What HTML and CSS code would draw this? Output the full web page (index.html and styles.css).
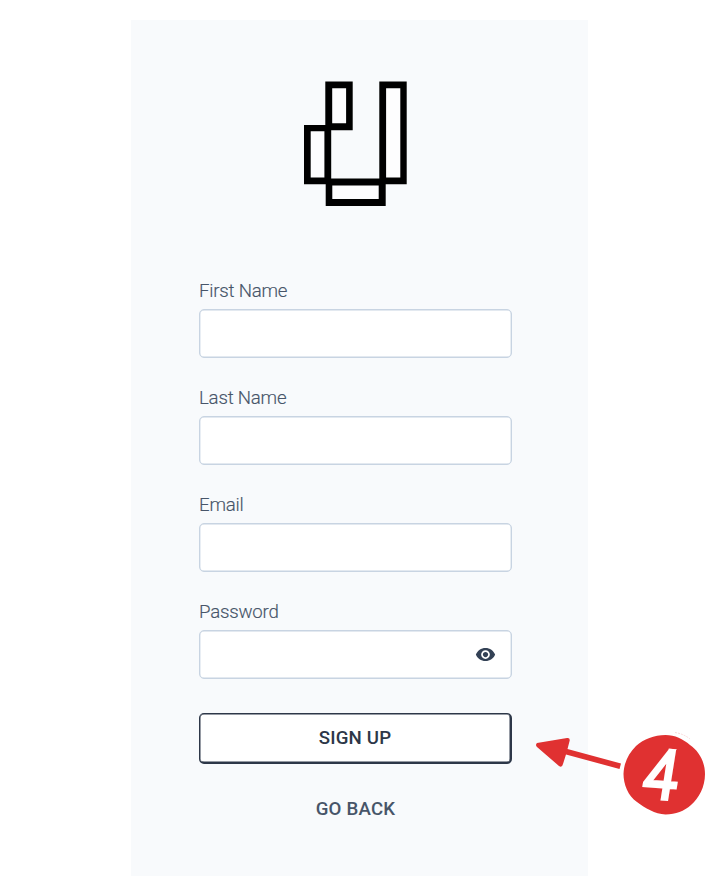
FILE: index.html
```html
<!DOCTYPE html>
<html lang="en">
<head>
<meta charset="utf-8">
<title>Sign up</title>
<link rel="stylesheet" href="styles.css">
</head>
<body>
<main class="panel">
  <svg class="logo" viewBox="304 81 103 125" aria-hidden="true">
    <path d="M325.3 81.4h27.4v48.8h-21.5v48.2h48.1v-97h27.4v102.9h-21v21.7h-60v-21.7H304v-59.4h21.3z"/>
    <path class="hole" d="M332.2 88.3h13.9v35h-13.9zM310.7 131.3h13.7v46.3h-13.7zM386.1 88.3h14.2v89.3h-14.2zM332.3 185.4h46.4v13.7h-46.4z"/>
  </svg>
  <form class="form">
    <div class="field"><label for="first">First Name</label><input id="first" type="text"></div>
    <div class="field"><label for="last">Last Name</label><input id="last" type="text"></div>
    <div class="field"><label for="email">Email</label><input id="email" type="text"></div>
    <div class="field password">
      <label for="pass">Password</label><input id="pass" type="password">
      <svg class="eye" viewBox="0 0 24 24" aria-hidden="true"><path d="M12 4.5C7 4.5 2.73 7.61 1 12c1.73 4.39 6 7.5 11 7.5s9.27-3.11 11-7.5c-1.73-4.39-6-7.5-11-7.5zM12 17c-2.76 0-5-2.24-5-5s2.24-5 5-5 5 2.24 5 5-2.24 5-5 5zm0-8c-1.66 0-3 1.34-3 3s1.34 3 3 3 3-1.34 3-3-1.34-3-3-3z"/></svg>
    </div>
    <button class="signup" type="button">SIGN UP</button>
    <button class="back" type="button">GO BACK</button>
  </form>
</main>
<div class="callout">
  <svg class="marker" viewBox="530 725 186 100" aria-hidden="true">
    <path d="M537 743Q535 745 537 747L559 766Q562 768 563 764L566 754.5L619.5 769L621 763.5L567.5 749L569.7 740.5Q570 737.5 567 738Z"/>
    <path d="M665.5 735C675 735 683 739 690 745C699 751 705 762 705 774C705 787 699 798 691 805C684 811 676 814.500 665.500 814.500C655 814 645 808 637 802C628 796 623.500 784 623.500 774C624 763 628 754 636 746C644 739 654 735 665.5 735Z"/>
    <path class="scratch" d="M675 732.5Q684 734 690 739"/>
  </svg>
  <span class="number">4</span>
</div>
</body>
</html>
```
FILE: styles.css
```css
* { box-sizing: border-box; }
body {
  margin: 0;
  width: 726px;
  height: 896px;
  padding: 20px 0 0 131px;
  background: #fff;
  font-family: Roboto, "Liberation Sans", sans-serif;
  position: relative;
  overflow: hidden;
}
.panel {
  width: 457px;
  height: 856px;
  padding: 61px 76px 0 68px;
  background: #f8fafc;
}
.logo { display: block; width: 103px; height: 125px; margin-left: 105px; overflow: visible; }
.hole { fill: #fdfdfe; }
.form { display: flex; flex-direction: column; margin-top: 73px; }
.field { display: flex; flex-direction: column; height: 107px; position: relative; }
.field label {
  height: 30.3px;
  line-height: 25px;
  font-size: 18.67px;
  font-weight: 330;
  letter-spacing: -.22px;
  color: #475569;
  -webkit-text-stroke: .15px #475569;
}
.field input {
  width: 313px;
  height: 49px;
  margin: 0;
  padding: 0 12px;
  border: 1px solid #c8d4e2;
  border-radius: 5px;
  box-shadow: inset 0 0 0 .4px #c8d4e2;
  background: #fff;
}
.eye { position: absolute; right: 16px; top: 44px; width: 21px; height: 21px; fill: #334155; }
button { font-family: inherit; font-size: 18.67px; font-weight: 500; padding: 0; }
.signup {
  width: 313px;
  height: 51px;
  margin-top: 6px;
  border: 1px solid #2d3748;
  border-right-width: 2px;
  border-bottom-width: 2px;
  border-radius: 5px;
  box-shadow: inset 0 0 0 .5px #2d3748;
  background: #fff;
  color: #2d3748;
  letter-spacing: .2px;
}
.back {
  height: 24px;
  margin-top: 33px;
  border: 0;
  background: none;
  color: #475569;
  letter-spacing: .2px;
}
.callout { position: absolute; left: 530px; top: 725px; width: 186px; height: 100px; }
.marker { display: block; width: 186px; height: 100px; fill: #e03131; }
.scratch { fill: none; stroke: #efb8b8; stroke-width: .5; stroke-dasharray: 2 1; }
.number {
  position: absolute;
  left: 110px;
  top: 17px;
  width: 42px;
  line-height: 66px;
  text-align: center;
  font-size: 67px;
  font-weight: 300;
  color: #fff;
  -webkit-text-stroke: 4.5px #fff;
  stroke-linejoin: round;
  transform: rotate(4deg) skewX(-5deg) scaleX(.9);
}
```
